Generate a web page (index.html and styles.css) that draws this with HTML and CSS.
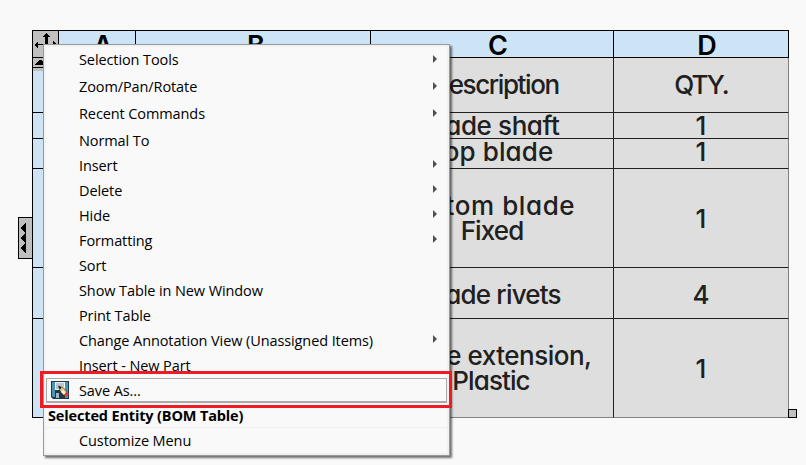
FILE: index.html
```html
<!DOCTYPE html>
<html lang="en">
<head>
<meta charset="utf-8">
<title>BOM Table</title>
<link rel="stylesheet" href="styles.css">
</head>
<body>
<main class="sheet">
  <div class="bom">
    <div class="row head"><div class="corner"></div><div><span class="ha">A</span></div><div><span class="hb">B</span></div><div><span class="hc">C</span></div><div><span class="hd">D</span></div></div>
    <div class="row r1"><div class="num"></div><div></div><div></div><div class="desc"><span class="t1">Description</span></div><div class="qty"><span class="tq">QTY.</span></div></div>
    <div class="row r2"><div class="num"></div><div></div><div></div><div class="desc"><span class="t2">Blade shaft</span></div><div class="qty"><span>1</span></div></div>
    <div class="row r3"><div class="num"></div><div></div><div></div><div class="desc"><span class="t3">Top blade</span></div><div class="qty"><span class="q3">1</span></div></div>
    <div class="row r4"><div class="num"></div><div></div><div></div><div class="desc"><span class="t4">Bottom blade</span><span class="t5">Fixed</span></div><div class="qty"><span>1</span></div></div>
    <div class="row r5"><div class="num"></div><div></div><div></div><div class="desc"><span class="t6">Blade rivets</span></div><div class="qty"><span class="q5">4</span></div></div>
    <div class="row r6"><div class="num"></div><div></div><div></div><div class="desc"><span class="t7">Blade extension,</span><span class="t8">Plastic</span></div><div class="qty"><span>1</span></div></div>
  </div>
  <svg class="move" width="27" height="41" viewBox="0 0 27 41" shape-rendering="crispEdges">
    <rect width="27" height="41" fill="#c0c0c0"/>
    <path d="M0 .5h27M.5 0v41M26.5 0v27M0 27.5h27M0 37.5h27" stroke="#000"/>
    <path d="M14 3l4 4h-2v7h5v-3l4 4-4 3v-3h-5v6h2l-4 4-4-4h2v-6H6v3l-4-3 4-4v3h7V7h-3z" fill="#000"/>
    <path d="M3 35l4-5h3l4 5z" fill="#000"/>
  </svg>
  <svg class="tab" width="15" height="42" viewBox="0 0 15 42" shape-rendering="crispEdges">
    <path d="M.5 .5h14v41H.5z" fill="#c0c0c0" stroke="#000"/>
    <path d="M2 11l5-5h1v10H7zM2 21l5-5h1v10H7zM2 31l5-5h1v10H7z" fill="#000"/>
  </svg>
  <div class="grip"></div>

  <nav class="menu">
    <div class="item tall more"><span>Selection Tools</span></div>
    <div class="item tall more"><span>Zoom/Pan/Rotate</span></div>
    <div class="item tall more"><span>Recent Commands</span></div>
    <div class="item"><span>Normal To</span></div>
    <div class="item more"><span>Insert</span></div>
    <div class="item more"><span>Delete</span></div>
    <div class="item more"><span>Hide</span></div>
    <div class="item more"><span>Formatting</span></div>
    <div class="item"><span>Sort</span></div>
    <div class="item"><span>Show Table in New Window</span></div>
    <div class="item"><span>Print Table</span></div>
    <div class="item more"><span>Change Annotation View (Unassigned Items)</span></div>
    <div class="item"><span>Insert - New Part</span></div>
    <div class="item active">
      <svg class="disk" width="18" height="18" viewBox="0 0 18 18">
        <path d="M0 0h18v18H2l-2-2z" fill="#173a50"/>
        <path d="M1 1h3v15H2l-1-1zM14 1h3v16h-3z" fill="#4f93b4"/>
        <path d="M4 1h10v8H4z" fill="#edf4f7"/>
        <path d="M5 3h8M5 5h8M5 7h6" stroke="#84999f"/>
        <path d="M4 11h10v6H4z" fill="#26363f"/>
        <path d="M5 12h3v5H5z" fill="#9bb9c5"/>
        <path d="M7.500 5l5 2 3.500 4-3 3-4-4z" fill="#e8c78b" stroke="#25221d" stroke-width=".6"/>
        <path d="M7.500 5l3 1.500-1.500 2z" fill="#111"/>
        <path d="M12 9l3 3-2 2-3-3z" fill="#fff3cf"/>
        <path d="M15 11l3 2-3 3-2-2z" fill="#d94332"/>
      </svg>
      <span>Save As...</span>
    </div>
    <div class="item title"><span>Selected Entity (BOM Table)</span></div>
    <div class="item last"><span>Customize Menu</span></div>
  </nav>
  <div class="highlight"></div>
</main>
</body>
</html>
```
FILE: styles.css
```css
* { box-sizing: border-box; }
body { margin: 0; background: #f9f9f9; }
.sheet { position: relative; width: 806px; height: 465px; overflow: hidden; padding: 30px 0 0 32px; }

.bom {
  width: 757px;
  border-top: 1px solid #000;
  border-left: 1px solid #000;
  font: 500 26px/25px Inter, Lato, sans-serif;
  font-feature-settings: "cv11" 1;
  color: #202020;
}
.row { display: grid; grid-template-columns: 26px 77px 235px 243px 175px; background: #dedede; }
.row > div {
  display: flex; flex-direction: column; align-items: center; justify-content: center;
  border-right: 1px solid #202020; border-bottom: 1px solid #202020;
  white-space: nowrap; min-width: 0; min-height: 0;
}
.row > div:last-child { border-right-color: #808080; }
.row span { position: relative; }
.head { height: 27px; color: #000; font-size: 27px; font-weight: 600; }
.row.head > div { background: #cde4f7; border-color: #000; }
.row > .num { background: #cde4f7; border-color: #000; }
.head span { top: 1px; }
.ha { left: 6px; }
.hb { left: 3px; }
.hc { left: 6px; }
.hd { left: 6px; }
.r1 { height: 55px; }
.r2 { height: 26px; }
.r3 { height: 30px; }
.r4 { height: 99px; }
.r5 { height: 51px; }
.r6 { height: 99px; }
.r6 > div { border-bottom-color: #808080; }
.t1 { left: 3px; top: -1px; letter-spacing: -1.4px; }
.t2 { left: -1px; letter-spacing: -0.4px; }
.t3 { left: -1px; top: -2px; letter-spacing: 0.1px; }
.t4 { left: -3px; letter-spacing: 0.6px; }
.t5 { letter-spacing: -0.9px; }
.t6 { left: 0; top: 1px; letter-spacing: -0.8px; }
.t7 { letter-spacing: -0.5px; }
.t8 { left: -1px; letter-spacing: -0.9px; }
.tq { top: -1px; letter-spacing: -2px; }
.q3 { top: -2px; }
.q5 { top: 1px; }

.move { position: absolute; left: 32px; top: 30px; }
.tab { position: absolute; left: 18px; top: 217px; }
.grip { position: absolute; left: 788px; top: 409px; width: 9px; height: 9px; border: 1px solid #000; background: #c0c0c0; }

.menu {
  position: absolute; left: 43px; top: 44px; width: 407px; height: 412px;
  padding: 2px; border: 1px solid #999;
  background: #f9f9f9;
  box-shadow: inset -2px -2px 0 #f0f0ec, inset 2px 2px 0 #f3f3f1, 2px 2px 2px rgba(0, 0, 0, .55);
  font: 14.5px/25px "Open Sans", "Noto Sans", sans-serif;
  color: #000;
}
.item { position: relative; height: 25px; padding-left: 33px; white-space: nowrap; letter-spacing: -0.1px; }
.tall { height: 27px; line-height: 25px; }
.more::after {
  content: ""; position: absolute; left: 387px; top: calc(50% - 6px);
  border: 4px solid transparent; border-left: 4px solid #505050; border-right: 0;
}
.active { display: flex; align-items: center; padding: 0 0 0 4px; border: 1px solid #aaa; border-bottom-width: 2px; }
.disk { margin-right: 10px; }
.active span { line-height: 22px; padding-top: 2px; }
.title { padding-left: 2px; font-weight: 700; letter-spacing: -0.15px; border-bottom: 1px solid #eee; }
.highlight { position: absolute; left: 40px; top: 371px; width: 412px; height: 37px; border: 3px solid #ed1c24; }
```
